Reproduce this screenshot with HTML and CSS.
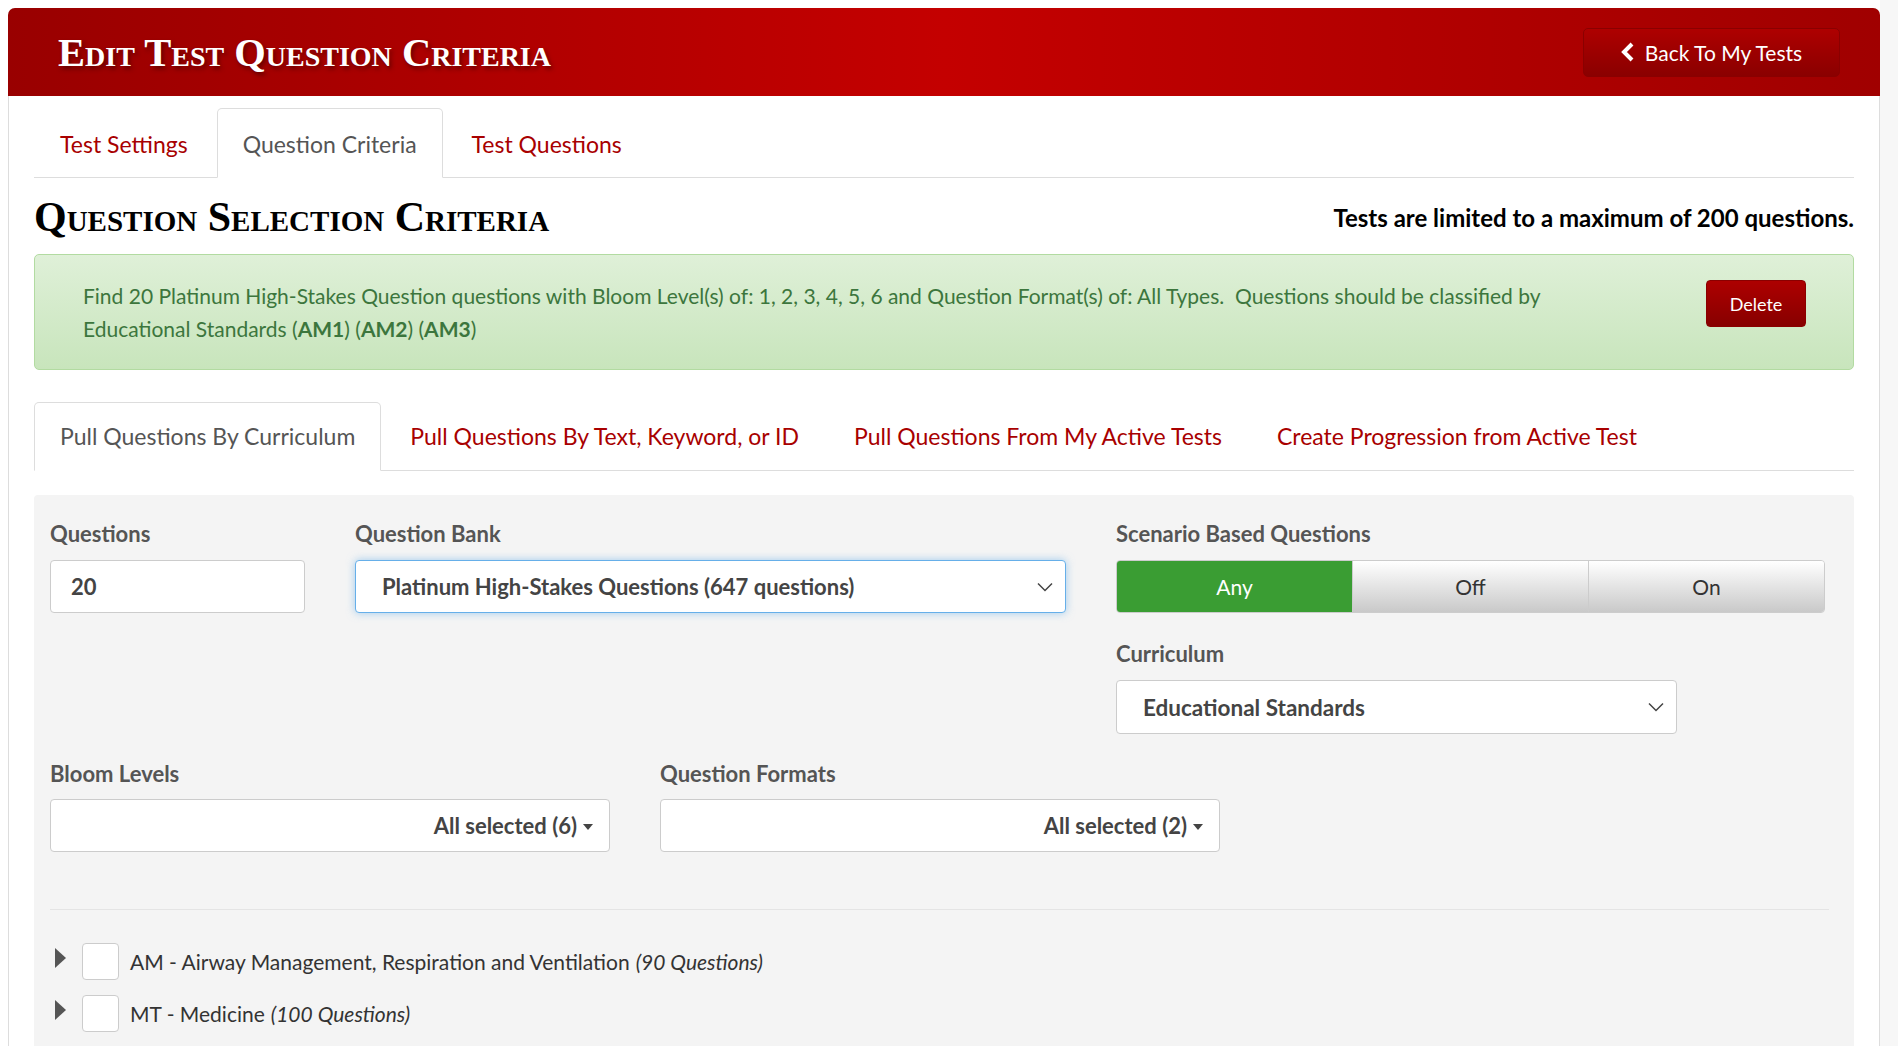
FILE: index.html
```html
<!DOCTYPE html>
<html lang="en">
<head>
    <meta charset="UTF-8">
    <meta name="viewport" content="width=device-width, initial-scale=1.0">
    <title>Edit Test Question Criteria</title>
    <link rel="stylesheet" href="styles.css">
</head>
<body>
    <div class="page">
        <div class="page-header">
            <h1>Edit Test Question Criteria</h1>
            <button class="back-button">
                <svg width="14" height="20" viewBox="0 0 14 20"><polyline points="11,2 3,10 11,18" fill="none" stroke="#fff" stroke-width="4" stroke-linejoin="miter"/></svg>
                Back To My Tests
            </button>
        </div>

        <div class="content">
            <ul class="tabs">
                <li><a href="#">Test Settings</a></li>
                <li class="active"><a href="#">Question Criteria</a></li>
                <li><a href="#">Test Questions</a></li>
            </ul>

            <div class="section-head">
                <h2>Question Selection Criteria</h2>
                <div class="limit">Tests are limited to a maximum of 200 questions.</div>
            </div>

            <div class="alert">
                <p>Find 20 Platinum High-Stakes Question questions with Bloom Level(s) of: 1, 2, 3, 4, 5, 6 and Question Format(s) of: All Types.&nbsp; Questions should be classified by Educational Standards (<b>AM1</b>) (<b>AM2</b>) (<b>AM3</b>)</p>
                <button class="delete-button">Delete</button>
            </div>

            <ul class="tabs tabs-pull">
                <li class="active"><a href="#">Pull Questions By Curriculum</a></li>
                <li><a href="#">Pull Questions By Text, Keyword, or ID</a></li>
                <li><a href="#">Pull Questions From My Active Tests</a></li>
                <li><a href="#">Create Progression from Active Test</a></li>
            </ul>

            <div class="criteria-panel">
                <div class="row-top">
                    <div class="field">
                        <label>Questions</label>
                        <div class="input-box">20</div>
                    </div>
                    <div class="field">
                        <label>Question Bank</label>
                        <div class="select-box focused">
                            <span>Platinum High-Stakes Questions (647 questions)</span>
                            <svg width="16" height="10" viewBox="0 0 16 10"><polyline points="1,1.5 8,8.5 15,1.5" fill="none" stroke="#444" stroke-width="1.5"/></svg>
                        </div>
                    </div>
                    <div class="field">
                        <label>Scenario Based Questions</label>
                        <div class="toggle">
                            <div class="toggle-item on">Any</div>
                            <div class="toggle-item">Off</div>
                            <div class="toggle-item">On</div>
                        </div>
                        <label class="spaced">Curriculum</label>
                        <div class="select-box curriculum">
                            <span>Educational Standards</span>
                            <svg width="16" height="10" viewBox="0 0 16 10"><polyline points="1,1.5 8,8.5 15,1.5" fill="none" stroke="#444" stroke-width="1.5"/></svg>
                        </div>
                    </div>
                </div>

                <div class="row-multi">
                    <div class="field">
                        <label>Bloom Levels</label>
                        <div class="multi-box">All selected (6) <span class="caret"></span></div>
                    </div>
                    <div class="field">
                        <label>Question Formats</label>
                        <div class="multi-box">All selected (2) <span class="caret"></span></div>
                    </div>
                </div>

                <hr class="divider">

                <ul class="tree">
                    <li><span class="arrow"></span><span class="check"></span>AM - Airway Management, Respiration and Ventilation <i>(90 Questions)</i></li>
                    <li><span class="arrow"></span><span class="check"></span>MT - Medicine <i>(100 Questions)</i></li>
                    <li><span class="arrow"></span><span class="check"></span>OB - Obstetrics <i>(80 Questions)</i></li>
                </ul>
            </div>
        </div>
    </div>
</body>
</html>
```

FILE: styles.css
```css
* {
    box-sizing: border-box;
}

html, body {
    height: 100%;
    overflow: hidden;
}

body {
    margin: 0;
    background: linear-gradient(to right, #fff calc(100% - 18px), #f7f7f7 0);
    font-family: 'Lato', 'Open Sans', sans-serif;
    color: #333;
}

.page {
    margin: 8px 18px 0 8px;
    border: 1px solid #ddd;
    border-bottom: none;
    border-radius: 7px 7px 0 0;
    background: #fff;
    min-height: 1100px;
}

.page-header {
    height: 88px;
    margin: -1px -1px 0;
    border-radius: 7px 7px 0 0;
    background: linear-gradient(to right, #990000 0%, #c40000 50%, #a00000 100%);
    display: flex;
    align-items: center;
    justify-content: space-between;
    padding: 0 40px 0 50px;
}

.page-header h1 {
    margin: 0;
    font-family: 'Liberation Serif', serif;
    font-variant: small-caps;
    font-weight: bold;
    font-size: 40.5px;
    color: #fff;
    text-shadow: 2px 3px 4px rgba(60, 0, 0, 0.6);
}

.back-button {
    display: flex;
    align-items: center;
    gap: 10px;
    height: 49px;
    width: 257px;
    justify-content: center;
    border: 1px solid #8a0000;
    border-radius: 5px;
    background: linear-gradient(to bottom, #ae0000, #8a0000);
    color: #fff;
    font-family: 'Lato', sans-serif;
    font-size: 21px;
}

.content {
    padding: 0 25px;
}

.tabs {
    list-style: none;
    margin: 12px 0 0;
    padding: 0;
    display: flex;
    border-bottom: 1px solid #ddd;
}

.tabs li {
    margin: 0 3px -1px 0;
}

.tabs a {
    display: block;
    padding: 0 25px;
    height: 70px;
    line-height: 70px;
    font-size: 23px;
    color: #a80000;
    text-decoration: none;
    border: 1px solid transparent;
    border-radius: 5px 5px 0 0;
}

.tabs .active a {
    color: #555;
    background: #fff;
    border-color: #ddd #ddd transparent;
}

.section-head {
    display: flex;
    justify-content: space-between;
    align-items: center;
    height: 76px;
    padding-top: 2px;
}

.section-head h2 {
    margin: 0;
    font-family: 'Liberation Serif', serif;
    font-variant: small-caps;
    font-weight: bold;
    font-size: 42px;
    color: #000;
}

.limit {
    font-weight: bold;
    font-size: 24px;
    color: #000;
}

.alert {
    display: flex;
    justify-content: space-between;
    align-items: flex-start;
    min-height: 116px;
    padding: 24px 47px 0 48px;
    border: 1px solid #b2dba1;
    border-radius: 5px;
    background: linear-gradient(to bottom, #dff0d8, #c8e5bc);
    color: #3c763d;
}

.alert p {
    margin: 0;
    max-width: 1480px;
    font-size: 21px;
    line-height: 33px;
}

.delete-button {
    flex: none;
    width: 100px;
    height: 47px;
    margin-top: 1px;
    border: 1px solid #8a0000;
    border-radius: 4px;
    background: linear-gradient(to bottom, #ad0000, #870000);
    color: #fff;
    font-family: 'Lato', sans-serif;
    font-size: 18px;
}

.tabs-pull {
    margin-top: 32px;
}

.tabs-pull a {
    height: 69px;
    line-height: 66px;
}

.criteria-panel {
    margin-top: 24px;
    padding: 26px 16px 0;
    background: #f4f4f4;
    border-radius: 4px 4px 0 0;
    min-height: 600px;
}

label {
    display: block;
    height: 26px;
    line-height: 26px;
    margin-bottom: 13px;
    font-weight: bold;
    font-size: 22px;
    color: #555;
}

label.spaced {
    margin-top: 28px;
}

.row-top {
    display: grid;
    grid-template-columns: 255px 711px 709px;
    gap: 50px;
}

.input-box,
.select-box,
.multi-box {
    height: 53px;
    border: 1px solid #ccc;
    border-radius: 4px;
    background: #fff;
    font-size: 22px;
    font-weight: bold;
    color: #444;
    display: flex;
    align-items: center;
}

.input-box {
    padding-left: 20px;
}

.select-box {
    justify-content: space-between;
    padding: 0 12px 0 26px;
}

.select-box.focused {
    border-color: #66afe9;
    box-shadow: 0 0 8px rgba(102, 175, 233, 0.6);
}

.select-box.curriculum {
    width: 561px;
    height: 54px;
    font-size: 22.5px;
}

.toggle {
    display: flex;
    height: 53px;
    border: 1px solid #ccc;
    border-radius: 4px;
    overflow: hidden;
}

.toggle-item {
    flex: 1;
    display: flex;
    align-items: center;
    justify-content: center;
    font-size: 21px;
    color: #333;
    background: linear-gradient(to bottom, #fff, #c9c9c9);
    border-left: 1px solid #ccc;
}

.toggle-item.on {
    background: #3a9d33;
    color: #fff;
    border-left: none;
}

.row-multi {
    display: grid;
    grid-template-columns: 560px 560px;
    gap: 50px;
    margin-top: 27px;
}

.row-multi label {
    margin-bottom: 12px;
}

.multi-box {
    justify-content: flex-end;
    gap: 6px;
    padding-right: 16px;
}

.caret {
    width: 0;
    height: 0;
    border-left: 5px solid transparent;
    border-right: 5px solid transparent;
    border-top: 6px solid #444;
    margin-top: 2px;
}

.divider {
    margin: 57px 9px 0 0;
    border: none;
    border-top: 1px solid #e4e4e4;
}

.tree {
    list-style: none;
    margin: 25px 0 0;
    padding: 0 0 0 5px;
}

.tree li {
    display: flex;
    align-items: center;
    height: 52px;
    font-size: 21px;
    color: #333;
}

.tree i {
    margin-left: 6px;
}

.arrow {
    width: 0;
    height: 0;
    border-top: 10px solid transparent;
    border-bottom: 10px solid transparent;
    border-left: 11px solid #555;
    margin-right: 16px;
    margin-top: -6px;
}

.check {
    width: 37px;
    height: 37px;
    border: 1px solid #ccc;
    border-radius: 4px;
    background: #fff;
    margin-right: 11px;
}
```
